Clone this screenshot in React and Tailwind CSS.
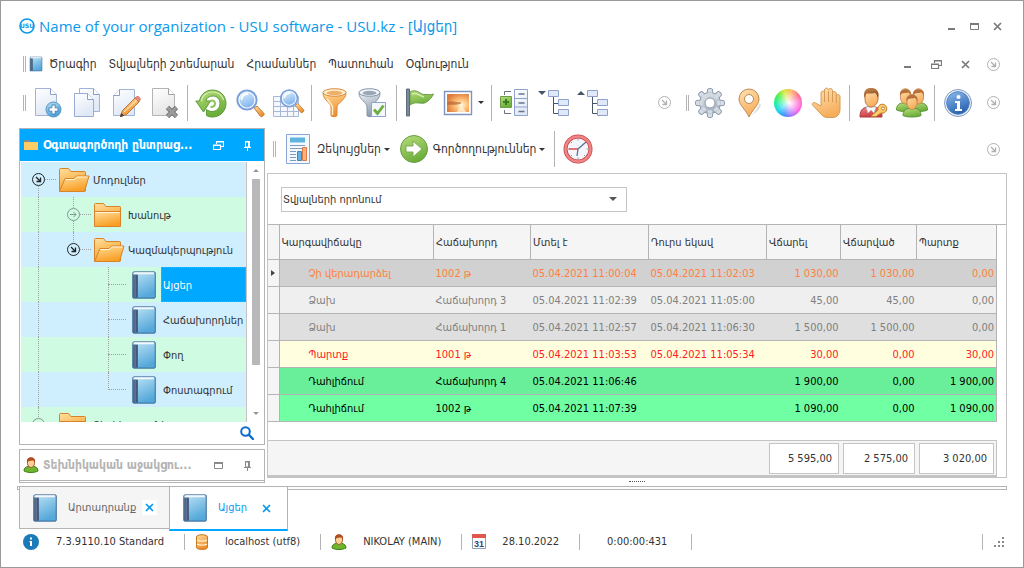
import { useState } from 'react';

const visitas = [
  { estado: 'Չի վերադարձել', cliente: '1002 թ', entrada: '05.04.2021 11:00:04', salida: '05.04.2021 11:02:03', pagar: '1 030,00', pagado: '1 030,00', deuda: '0,00', color: 'bg-[#d1d1d1] text-[#ff8040]' },
  { estado: 'Ձախ', cliente: 'Հաճախորդ 3', entrada: '05.04.2021 11:02:39', salida: '05.04.2021 11:05:00', pagar: '45,00', pagado: '45,00', deuda: '0,00', color: 'bg-[#efefef] text-[#808080]' },
  { estado: 'Ձախ', cliente: 'Հաճախորդ 1', entrada: '05.04.2021 11:02:57', salida: '05.04.2021 11:06:30', pagar: '1 500,00', pagado: '1 500,00', deuda: '0,00', color: 'bg-[#dfdfdf] text-[#808080]' },
  { estado: 'Պարտք', cliente: '1001 թ', entrada: '05.04.2021 11:03:53', salida: '05.04.2021 11:05:34', pagar: '30,00', pagado: '0,00', deuda: '30,00', color: 'bg-[#ffffe0] text-[#ff2020]' },
  { estado: 'Դահլիճում', cliente: 'Հաճախորդ 4', entrada: '05.04.2021 11:06:46', salida: '', pagar: '1 900,00', pagado: '0,00', deuda: '1 900,00', color: 'bg-[#69ef99] text-black' },
  { estado: 'Դահլիճում', cliente: '1002 թ', entrada: '05.04.2021 11:07:39', salida: '', pagar: '1 090,00', pagado: '0,00', deuda: '1 090,00', color: 'bg-[#70ffa3] text-black' },
];

const columnas = ['Կարգավիճակը', 'Հաճախորդ', 'Մտել է', 'Դուրս եկավ', 'Վճարել', 'Վճարված', 'Պարտք'];

/* Degradados compartidos por los iconos */
function Gradients() {
  const list = [
    ['gPage', '#ffffff', '#dfe8f6'],
    ['gGray', '#ffffff', '#e6e6e6'],
    ['gBlue', '#b5e2f7', '#4ba3d8'],
    ['gInfo', '#8dbdf0', '#2c64b0'],
    ['gLens', '#e9f8ff', '#7fb2ee'],
    ['gGreen', '#b9dd7c', '#6cae3a'],
    ['gOrange', '#ffdf9e', '#f08c2c'],
    ['gFolder', '#ffe0a0', '#f99f25'],
    ['gSkin', '#ffe3b5', '#f7ae5c'],
    ['gSteel', '#eef2f6', '#8c9db0'],
    ['gGear', '#e4e9ef', '#a4afbd'],
    ['gBook', '#bfe4f6', '#55a8da'],
    ['gRed', '#f08a8a', '#cc3a42'],
    ['gHair', '#c98a50', '#8a4d22'],
  ];
  return (
    <svg width="0" height="0" className="absolute" aria-hidden="true">
      <defs>
        {list.map(([id, a, b]) => (
          <linearGradient key={id} id={id} x1="0" y1="0" x2="0.4" y2="1">
            <stop offset="0" stopColor={a} />
            <stop offset="1" stopColor={b} />
          </linearGradient>
        ))}
        <radialGradient id="gSun" cx="0.65" cy="0.6" r="0.7">
          <stop offset="0" stopColor="#fffbe0" />
          <stop offset="0.4" stopColor="#ffc27a" />
          <stop offset="1" stopColor="#dd7a3c" />
        </radialGradient>
      </defs>
    </svg>
  );
}

function Icon({ size = 'size-8', children }) {
  return (
    <svg viewBox="0 0 32 32" className={`${size} shrink-0`} fill="none" aria-hidden="true">
      {children}
    </svg>
  );
}

const NewDoc = () => (
  <Icon>
    <path d="M3.500 1.500h15l6 6v21h-21z" fill="url(#gPage)" stroke="#a3b3d6" />
    <path d="M18.500 1.500v6h6" fill="#fff" stroke="#8c9fc9" />
    <circle cx="21.500" cy="22.500" r="7.500" fill="url(#gBlue)" stroke="#5794c4" />
    <path d="M21.500 17.500v10M16.500 22.500h10" stroke="#4d83b5" strokeWidth="4" />
    <path d="M21.500 18.500v8M17.500 22.500h8" stroke="#fff" strokeWidth="2.400" />
  </Icon>
);

const CopyDoc = () => (
  <Icon>
    <path d="M8.500 1.500h14l6 6v17h-20z" fill="url(#gPage)" stroke="#a3b3d6" />
    <path d="M22.500 1.500v6h6" fill="#fff" stroke="#8c9fc9" />
    <path d="M3.500 6.500h13l6 6v17h-19z" fill="url(#gPage)" stroke="#9aacd3" />
    <path d="M16.500 6.500v6h6" fill="#fff" stroke="#8c9fc9" />
  </Icon>
);

const EditDoc = () => (
  <Icon>
    <path d="M9.500 2.500h15v26h-21v-20z" fill="url(#gPage)" stroke="#a3b3d6" />
    <path d="M9.500 2.500v6h-6" fill="#fff" stroke="#8c9fc9" />
    <path d="M10.500 29.500l2-6L25 11l4 4-12.500 12.500z" fill="url(#gOrange)" stroke="#b87834" />
    <path d="M14 25L27 13" stroke="#fff0c8" />
    <path d="M25 11l2-1.500c1-.8 4 2 3.200 3.200L29 15z" fill="#f08a7a" stroke="#c96a5c" strokeWidth=".8" />
    <path d="M10.500 29.500l1-3 2 2z" fill="#444" stroke="#444" />
  </Icon>
);

const DeleteDoc = () => (
  <Icon>
    <path d="M3.500 1.500h16l6 6v21h-22z" fill="url(#gGray)" stroke="#b4b4b4" />
    <path d="M19.500 1.500v6h6" fill="#fff" stroke="#a0a0a0" />
    <path d="M18.500 20.500l9 9m0-9l-9 9" stroke="#777" strokeWidth="4.600" />
    <path d="M18.500 20.500l9 9m0-9l-9 9" stroke="#9b9b9b" strokeWidth="2.800" />
  </Icon>
);

const Refresh = () => (
  <Icon>
    <path d="M4.500 14C5.500 7.500 11 3 17.500 3 25 3 31 9 31 16.500S25 30 17.500 30c-2.500 0-4.500-.5-6-1.500v-6c1.500 1.300 3.500 2 5.500 2 4.500 0 8-3.500 8-8s-3-7.500-7-7.500-6.500 2-7 5h4.500L8.500 25 .8 14z" fill="url(#gGreen)" stroke="#5f9a3c" strokeLinejoin="round" />
    <path d="M6.500 14.500C7 8.500 12 5 17.500 5s10 3.500 11 8" stroke="#d5edaf" strokeWidth="1.200" />
    <path d="M15 14c3-1 5 0 5 2.500s-2 3.500-4.500 3.500" stroke="#8cc45a" strokeWidth="2" />
  </Icon>
);

const Lens = () => (
  <>
    <path d="M20 20l3-2 7 7.500c1 1.200-2.200 4-3.400 3z" fill="url(#gOrange)" stroke="#c08040" />
    <circle cx="13" cy="12" r="9.500" fill="url(#gLens)" stroke="#7c9fdc" strokeWidth="2.200" />
    <circle cx="13" cy="12" r="8" stroke="#f4fbff" strokeWidth="1.200" />
    <path d="M7.500 11c.5-3 3-5 6-5" stroke="#fff" strokeWidth="2" strokeLinecap="round" />
  </>
);

const Search = () => (
  <Icon>
    <g transform="translate(0 1)"><Lens /></g>
  </Icon>
);

const SearchTable = () => (
  <Icon>
    <path d="M.5 9.500h25v20H.5z" fill="#f4f8fd" stroke="#a9b8d6" />
    <path d="M.5 14.500h25M.5 19.500h25M.5 24.500h25M7.500 9.500v20M14.500 9.500v20M20.500 9.500v20" stroke="#a9b8d6" />
    <g transform="translate(5 1) scale(.86)"><Lens /></g>
  </Icon>
);

const Funnel = () => (
  <Icon>
    <path d="M4 6c0 7 8 10 8 14v8.500c0 1.500 6 1.500 6 0V20c0-4 9-7 9-14z" fill="url(#gOrange)" stroke="#d98a3d" />
    <ellipse cx="15.500" cy="5.500" rx="11.500" ry="3.800" fill="#fff0d0" stroke="#d98a3d" />
    <ellipse cx="15.500" cy="6" rx="8" ry="2.200" fill="#eeb069" />
    <path d="M8 12c2 3 5 5 5.500 8v8" stroke="#fff0cc" strokeWidth="1.400" />
  </Icon>
);

const FunnelCheck = () => (
  <Icon>
    <path d="M1 6c0 7 8 9 8 14v8.500c0 1.500 6 1.500 6 0V20c0-5 7-7 7-14z" fill="url(#gSteel)" stroke="#8694a6" />
    <ellipse cx="11.500" cy="5.500" rx="10.500" ry="3.800" fill="#f2f5f9" stroke="#8694a6" />
    <ellipse cx="11.500" cy="6" rx="7" ry="2.200" fill="#9aa7b7" />
    <path d="M13.500 15.500h14v14h-14z" fill="#f3f8ff" stroke="#8ea2cc" />
    <path d="M16 22.500l3.500 4 6-8" stroke="#6fae3c" strokeWidth="2.800" />
  </Icon>
);

const Flag = () => (
  <Icon>
    <path d="M6 5c7-4 10 3 15 2.500 3 0 5.500.5 8.500-.5-2 4-5 7.500-9 9-5 1-9-2-14.500 2z" fill="url(#gGreen)" stroke="#6a9d48" />
    <path d="M8 7c5-2 8 2 12 3" stroke="#d2ecad" strokeWidth="1.500" />
    <path d="M2.500 2h3v27h-3z" fill="#7b8a9a" stroke="#5d6c7c" />
  </Icon>
);

const Picture = () => (
  <Icon>
    <path d="M1.500 4.500h27v23h-27z" fill="#fff" stroke="#7d96bd" strokeWidth="1.400" />
    <path d="M4 7h22v18H4z" fill="url(#gSun)" />
    <path d="M4 15c5-2 9 1 14 0v1.500c-5 2-9 1-14 1.500z" fill="#b86236" opacity=".7" />
    <path d="M18 17l-4 8h9z" fill="#fff8df" opacity=".7" />
  </Icon>
);

const ListTree = () => (
  <Icon>
    <path d="M12 4.500H5.500V8M12 26.500H5.500V23" stroke="#6b7280" />
    <path d="M1.500 9.500h11v11h-11z" fill="url(#gGreen)" stroke="#6d9d4b" />
    <path d="M7 12v6M4 15h6" stroke="#3b7a25" strokeWidth="2" />
    <path d="M15.500 2.500h13v26h-13z" fill="url(#gPage)" stroke="#8ea2cc" />
    <path d="M15.500 11.500h13M15.500 20h13" stroke="#8ea2cc" />
    <path d="M19.500 7h6M19.500 16h6M19.500 24.500h6" stroke="#64748b" strokeWidth="1.600" />
  </Icon>
);

const Hierarchy = ({ up }) => (
  <Icon>
    <path d={up ? 'M0 8l4-4 4 4z' : 'M0 4h8L4 8z'} fill="#475569" />
    <path d="M15.500 10v16.500h5M15.500 16.500h5" stroke="#475569" />
    <path d="M10.500 3.500h10v6h-10zM20.500 12.500h10v6h-10zM20.500 22.500h10v6h-10z" fill="#dfe9f8" stroke="#8ea2cc" />
  </Icon>
);

const Gear = () => (
  <Icon>
    {[0, 45, 90, 135, 180, 225, 270, 315].map((a) => (
      <path key={a} d="M13 7l.7-5c.2-.8 4.400-.8 4.600 0l.7 5z" fill="#d7dde5" stroke="#8d9bad" transform={`rotate(${a} 16 16)`} />
    ))}
    <circle cx="16" cy="16" r="10.500" fill="url(#gGear)" stroke="#8d9bad" />
    {[0, 45, 90, 135, 180, 225, 270, 315].map((a) => (
      <path key={a} d="M13.700 7h4.600" stroke="#d3dae2" strokeWidth="3.500" transform={`rotate(${a} 16 16)`} />
    ))}
    <circle cx="16" cy="16" r="5" fill="#fff" stroke="#8d9bad" />
  </Icon>
);

const Pin = () => (
  <Icon>
    <path d="M17 29c5-4 8-8 9.500-13l1.500 2c-1 4-5 8-11 11z" fill="#999" opacity=".3" />
    <path d="M16 30C13 23 6 18 6 12a10 10 0 0 1 20 0c0 6-7 11-10 18z" fill="url(#gSkin)" stroke="#c08a4b" />
    <circle cx="16" cy="12" r="4.500" fill="#fff" stroke="#b98a58" />
  </Icon>
);

const ColorWheel = () => (
  <div className="relative size-7 rounded-full bg-[conic-gradient(from_90deg,#ff5bd0,#ff4fe0,#a86bff,#3f8cff,#20d8f0,#20f0a0,#50f050,#d8e83c,#ffb05c,#ff5b7c,#ff5bd0)]">
    <div className="absolute inset-0 rounded-full bg-[radial-gradient(circle_at_55%_50%,white,transparent_65%)]" />
  </div>
);

const Hand = () => (
  <Icon>
    <path d="M10 19V6c0-2.500 3.500-2.500 3.500 0V3c0-2.500 4-2.500 4 0v0c0-2 4-2 4 .5V6c0-2 3.800-2 3.800.5V9c.2-2 3.700-2 3.700.5V22c0 5-3 8.500-7 8.500h-6c-3 0-5-2-7-4.500L1.500 18c-1-2 1.500-3 3-2z" fill="url(#gSkin)" stroke="#d59a55" />
    <path d="M13.500 6v9M17.500 4v11M21.500 5v10M25.300 8v8" stroke="#d59a55" />
  </Icon>
);

const UserKey = () => (
  <Icon>
    <path d="M3 30c0-6 2-9 7-10h8c5 1 7 4 7 10z" fill="url(#gRed)" stroke="#a83c40" />
    <path d="M9 20l2 6 3-3 3 3 2-6z" fill="#fff" stroke="#b8c4d4" strokeWidth=".8" />
    <path d="M8 8c0-4 3-6.500 6-6.500S21 4 21 8v4c0 4-3.500 8-7 8s-6-4-6-8z" fill="url(#gSkin)" stroke="#b57a42" />
    <path d="M7.500 11C6 4 9 1 14 1s9 3 7 10c-1-2-1-4-3-5-4 1-8 0-9 1z" fill="url(#gHair)" />
    <path d="M14 29l7-6a4.500 4.500 0 1 1 3 3l-5 3.500h-3z" fill="#ffcb6b" stroke="#ba7f2b" />
    <circle cx="26" cy="21.500" r="1.500" fill="#fff" stroke="#ba7f2b" />
  </Icon>
);

const Head = ({ x, y }) => (
  <g transform={`translate(${x} ${y})`}>
    <path d="M-9 20c0-5 3-7 6-7h6c3 0 6 2 6 7-4 2-14 2-18 0z" fill="url(#gGreen)" stroke="#5d9639" />
    <path d="M-5 4c0-7 10-7 10 0v4c0 3-2.500 6-5 6s-5-3-5-6z" fill="url(#gSkin)" stroke="#b9804c" strokeWidth=".8" />
    <path d="M-5.500 6C-7-3 7-3 5.500 6 4.500 4.500 4 3 3 2.500-1 3.500-4 2-5.500 6z" fill="#b8703a" />
  </g>
);

const Users = () => (
  <Icon>
    <Head x={9.500} y={3} />
    <Head x={22.500} y={3} />
    <Head x={16} y={8.500} />
  </Icon>
);

const Info = () => (
  <Icon>
    <circle cx="16" cy="16" r="13.500" fill="#e8f0fa" stroke="#8599bd" />
    <circle cx="16" cy="16" r="11.300" fill="url(#gInfo)" stroke="#4f7fc0" />
    <circle cx="16.500" cy="10" r="2" fill="#fff" />
    <path d="M13 14h5v8h2v2h-7v-2h2v-6h-2z" fill="#fff" />
  </Icon>
);

const Report = () => (
  <Icon>
    <path d="M4.500 1.500h23v29h-23z" fill="#f4f9ff" stroke="#8ba6d3" />
    <path d="M8 4.500h15v5H8z" fill="#5fb4dd" />
    <path d="M8 12.500h15M8 15.500h15M8 18.500h6M8 21.500h6M8 24.500h6M8 27.500h6" stroke="#7d9cc0" />
    <path d="M15.500 18.500h4v9h-4z" fill="#5fb4e4" stroke="#3d86b8" />
    <path d="M20.500 14.500h4v13h-4z" fill="#ffb079" stroke="#dd7a48" />
  </Icon>
);

const GoArrow = () => (
  <Icon>
    <circle cx="16" cy="16" r="13.500" fill="url(#gGreen)" stroke="#6a9f43" />
    <path d="M8 13h7V8l9 8-9 8v-5H8z" fill="#fff" stroke="#7cab55" strokeLinejoin="round" />
  </Icon>
);

const Clock = () => (
  <Icon>
    <circle cx="16" cy="16" r="12.500" fill="#f3f6fa" stroke="#c9484c" strokeWidth="4" />
    <circle cx="16" cy="16" r="12.500" stroke="#f08585" strokeWidth="2.400" />
    <path d="M16 5.500v2M16 24.500v2M5.500 16h2M24.500 16h2M9 9l1 1M23 23l-1-1M9 23l1-1" stroke="#8a9ab5" />
    <path d="M16 16H7" stroke="#e03c3c" strokeWidth="1.400" />
    <path d="M16 16l8-7M16 16l-1 7" stroke="#5c7396" strokeWidth="1.300" />
  </Icon>
);

const Book = ({ size }) => (
  <Icon size={size}>
    <path d="M5 2h22a1 1 0 0 1 1 1v26a1 1 0 0 1-1 1H5a1 1 0 0 1-1-1V4c0-1 .5-2 1-2z" fill="url(#gBook)" stroke="#34618f" />
    <path d="M5 4c0-1 1-1.500 2-1.500h19.500v2H6z" fill="#f2f7fb" />
    <path d="M4.500 5h5v24.500h-5z" fill="#44587a" />
    <path d="M6.500 5v24" stroke="#7186a6" />
  </Icon>
);

const Folder = ({ open }) => (
  <Icon>
    <path d="M1.500 27V5.500c0-.8.5-1 1-1h8l2.500 3h13.500c.8 0 1 .4 1 1V27z" fill="url(#gFolder)" stroke="#d6832a" />
    {open
      ? <path d="M1.500 27.500l5.500-13h9l2.500-2.500H31L26.500 27.500z" fill="url(#gFolder)" stroke="#d6832a" />
      : <path d="M1.500 12.500h26v15h-26z" fill="url(#gFolder)" stroke="#d6832a" />}
    <path d={open ? 'M7.500 15.500h9l2.500-2.500h10.500' : 'M2.500 13.500h24'} stroke="#fff3d6" />
  </Icon>
);

const Person = () => (
  <Icon size="size-4">
    <path d="M2 28c0-6 4-9 9-9h10c5 0 9 3 9 9-8 4-20 4-28 0z" fill="#6fb52e" stroke="#3e7d16" strokeWidth="2" />
    <path d="M9 8c0-8 14-8 14 0v5c0 4-4 8-7 8s-7-4-7-8z" fill="#ffcf96" stroke="#a85a2a" strokeWidth="2" />
    <path d="M8 11C5-3 27-3 24 11c-2-3-3-4-5-4-5 1-8 0-11 4z" fill="#b04e22" />
  </Icon>
);

const CircleArrow = ({ dir = 'down', color = 'text-[#b0b0b0]' }) => (
  <svg viewBox="0 0 13 13" className={`size-[13px] shrink-0 ${color}`} fill="none" stroke="currentColor" aria-hidden="true">
    <circle cx="6.500" cy="6.500" r="6" />
    {dir === 'down' ? <path d="M4 4l4.500 4.500M8.500 4.500v4h-4" strokeWidth="1.300" /> : <path d="M3 6.500h6M6.500 4L9 6.500 6.500 9" />}
  </svg>
);

const WinIcon = ({ type }) => (
  <svg viewBox="0 0 11 11" className="size-[11px]" fill="none" stroke="currentColor" aria-hidden="true">
    {type === 'min' && <path d="M2 8h7" strokeWidth="2" />}
    {type === 'max' && <><path d="M1.500 2.500h8v6h-8z" /><path d="M1 3h9" strokeWidth="2" /></>}
    {type === 'close' && <path d="M2 2l7 7M9 2L2 9" strokeWidth="1.700" />}
    {type === 'restore' && <path d="M3.500 4V1.500h7v5H8M3 2h8M.5 5.500h7v4h-7zM0 5h8" strokeWidth="1.200" />}
    {type === 'pin' && <><path d="M3.500 2v5h4V2zM2 7.500h7M5.500 8v3M3 1.500h5" /><path d="M7 2v5" strokeWidth="2" /></>}
  </svg>
);

const Caret = () => <span className="border-x-[3px] border-t-[3px] border-x-transparent border-t-[#333]" />;

const Grip = () => <div className="h-4 w-[3px] shrink-0 border-x border-[#b4b4b4]" />;

const Sep = () => <div className="mx-[3px] h-9 w-px shrink-0 bg-[#b4b4b4]" />;

function Tool({ label, children }) {
  return (
    <button type="button" aria-label={label} className="flex w-[39px] shrink-0 items-center justify-center">
      {children}
    </button>
  );
}

function WinButton({ type, label }) {
  return (
    <button type="button" aria-label={label} className="flex size-[15px] items-center justify-center">
      <WinIcon type={type} />
    </button>
  );
}

function TitleBar() {
  return (
    <header className="flex h-[50px] items-center pr-[18px] pl-[18px]">
      <svg viewBox="0 0 16 16" className="size-4" aria-hidden="true">
        <circle cx="8" cy="8" r="7" fill="#fff" stroke="#0a9aec" strokeWidth="1.600" />
        <text x="8" y="10.300" textAnchor="middle" fontSize="6" fontWeight="bold" fontFamily="DejaVu Sans" fill="#0a9aec">USU</text>
      </svg>
      <h1 className="ml-1 font-['Open_Sans','DejaVu_Sans_Condensed',sans-serif] text-[15px] leading-6 whitespace-nowrap text-[#0a9aec]">
        Name of your organization - USU software - USU.kz - [Այցեր]
      </h1>
      <div className="ml-auto flex gap-2 text-[#7a7a7a]">
        <WinButton type="min" label="Minimize" />
        <WinButton type="max" label="Maximize" />
        <WinButton type="close" label="Close" />
      </div>
    </header>
  );
}

function MenuBar() {
  const menu = ['Ծրագիր', 'Տվյալների շտեմարան', 'Հրամաններ', 'Պատուհան', 'Օգնություն'];
  return (
    <nav className="flex h-[26px] items-center pr-[23px] pl-[22px]">
      <Grip />
      <div className="ml-[2px] mr-[5px]"><Book size="size-4" /></div>
      <div className="flex gap-3 text-xs">
        {menu.map((m) => <a key={m} href="#" className="whitespace-nowrap">{m}</a>)}
      </div>
      <div className="ml-auto flex items-center gap-[14px] text-[#7a7a7a]">
        <WinButton type="min" label="Minimize document" />
        <WinButton type="restore" label="Restore document" />
        <WinButton type="close" label="Close document" />
        <CircleArrow />
      </div>
    </nav>
  );
}

function ToolBar() {
  return (
    <div className="flex h-[51px] items-center pr-[23px] pl-[22px]">
      <Grip />
      <div className="ml-[2px] flex items-center">
        <Tool label="New"><NewDoc /></Tool>
        <Tool label="Copy"><CopyDoc /></Tool>
        <Tool label="Edit"><EditDoc /></Tool>
        <Tool label="Delete"><DeleteDoc /></Tool>
        <Sep />
        <Tool label="Refresh"><Refresh /></Tool>
        <Tool label="Search"><Search /></Tool>
        <Tool label="Search table"><SearchTable /></Tool>
        <Sep />
        <Tool label="Filter"><Funnel /></Tool>
        <Tool label="Apply filter"><FunnelCheck /></Tool>
        <Sep />
        <Tool label="Flag"><Flag /></Tool>
        <Tool label="Picture"><Picture /></Tool>
        <button type="button" aria-label="Picture options" className="flex w-[10px] justify-start"><Caret /></button>
        <Sep />
        <Tool label="Columns"><ListTree /></Tool>
        <Tool label="Expand"><Hierarchy /></Tool>
        <Tool label="Collapse"><Hierarchy up /></Tool>
      </div>
      <div className="ml-auto flex items-center">
        <CircleArrow />
        <div className="mr-px ml-[15px]"><Grip /></div>
        <Tool label="Settings"><Gear /></Tool>
        <Tool label="Map"><Pin /></Tool>
        <Tool label="Colors"><ColorWheel /></Tool>
        <Tool label="Stop"><Hand /></Tool>
        <Sep />
        <Tool label="Access"><UserKey /></Tool>
        <Tool label="Users"><Users /></Tool>
        <Sep />
        <Tool label="About"><Info /></Tool>
        <div className="ml-[10px]"><CircleArrow /></div>
      </div>
    </div>
  );
}

const arbol = [
  { nombre: 'Մոդուլներ', nivel: 0, flecha: 'down', oscuro: true, icono: 'abierta', lineas: ['ini'] },
  { nombre: 'Խանութ', nivel: 1, flecha: 'right', icono: 'cerrada', lineas: ['full', 'full'] },
  { nombre: 'Կազմակերպություն', nivel: 1, flecha: 'down', oscuro: true, icono: 'abierta', lineas: ['full', 'fin'] },
  { nombre: 'Այցեր', nivel: 2, icono: 'libro', lineas: ['full', '', 'full'] },
  { nombre: 'Հաճախորդներ', nivel: 2, icono: 'libro', lineas: ['full', '', 'full'] },
  { nombre: 'Փող', nivel: 2, icono: 'libro', lineas: ['full', '', 'full'] },
  { nombre: 'Փոստագրում', nivel: 2, icono: 'libro', lineas: ['full', '', 'fin'] },
  { nombre: 'Տեղեկատուներ', nivel: 0, flecha: 'right', icono: 'cerrada', lineas: ['fin'] },
];

const tramo = {
  full: 'top-0 bottom-0',
  ini: 'top-1/2 bottom-0',
  fin: 'top-0 bottom-1/2',
};

function TreeRow({ item, index, activo, onSelect }) {
  return (
    <li className={`flex h-[35px] ${index % 2 ? 'bg-[#cffbe3]' : 'bg-[#cfefff]'}`}>
      {item.lineas.map((linea, i) => {
        const ultimo = i === item.lineas.length - 1;
        return (
          <div key={i} className="relative flex w-[35px] shrink-0 items-center justify-center">
            {linea && <div className={`absolute left-[17px] border-l border-dotted border-[#a0a0a0] ${tramo[linea]}`} />}
            {ultimo && <div className="absolute top-[17px] right-0 left-[17px] border-t border-dotted border-[#a0a0a0]" />}
            {ultimo && item.flecha && (
              <span className={`relative rounded-full ${index % 2 ? 'bg-[#cffbe3]' : 'bg-[#cfefff]'}`}>
                <CircleArrow dir={item.flecha} color={item.oscuro ? 'text-[#222]' : 'text-[#7d9a8a]'} />
              </span>
            )}
          </div>
        );
      })}
      <div className="flex w-[35px] shrink-0 items-center justify-center">
        {item.icono === 'libro' ? <Book size="size-[30px]" /> : <Folder open={item.icono === 'abierta'} />}
      </div>
      <button
        type="button"
        onClick={() => onSelect(item.nombre)}
        className={`flex grow items-center border border-dotted px-px pt-[2px] text-left whitespace-nowrap ${activo ? 'border-[#e08060] bg-[#00a8ff] text-white' : 'border-transparent'}`}
      >
        {item.nombre}
      </button>
    </li>
  );
}

function Sidebar() {
  const [seleccion, setSeleccion] = useState('Այցեր');

  return (
    <aside className="mb-[3px] flex w-[246px] shrink-0 flex-col">
      <section className="flex grow flex-col border border-[#b4b4b4]">
        <div className="flex h-8 items-center bg-[#00a8ff] pr-[9px] pl-1 text-white">
          <svg viewBox="0 0 14 10" className="h-[10px] w-[14px]" aria-hidden="true">
            <path d="M0 0h5l1 2h8v8H0z" fill="#ffcc66" />
            <path d="M0 0h5l1 2H0z" fill="#8a8a8a" />
          </svg>
          <h2 className="ml-[5px] text-xs font-bold whitespace-nowrap">Օգտագործողի ընտրաց...</h2>
          <div className="ml-auto flex gap-[14px]">
            <WinButton type="restore" label="Float panel" />
            <WinButton type="pin" label="Pin panel" />
          </div>
        </div>
        <div className="mt-px flex h-[260px] overflow-hidden pl-px">
          <ul className="min-w-0 grow border-r border-[#c4c4c4]">
            {arbol.map((item, i) => (
              <TreeRow key={item.nombre} item={item} index={i} activo={seleccion === item.nombre} onSelect={setSeleccion} />
            ))}
          </ul>
          <div className="flex w-[17px] shrink-0 flex-col items-center py-[7px]">
            <span className="border-x-[3px] border-b-[3px] border-x-transparent border-b-[#999]" />
            <div className="mt-[7px] h-[186px] w-2 bg-[#b8b8b8]" />
            <span className="mt-auto border-x-[3px] border-t-[3px] border-x-transparent border-t-[#999]" />
          </div>
        </div>
        <div className="flex grow items-center justify-end pr-[10px]">
          <button type="button" aria-label="Find in tree">
            <svg viewBox="0 0 14 14" className="size-[14px]" fill="none" stroke="#0a6bd0" strokeLinecap="round" aria-hidden="true">
              <circle cx="5.500" cy="5.500" r="4.300" strokeWidth="2" />
              <path d="M9 9l4 4" strokeWidth="2.400" />
            </svg>
          </button>
        </div>
      </section>
      <section className="mt-1 border border-[#b4b4b4]">
        <div className="flex h-[31px] items-center border-b border-[#b4b4b4] pr-[9px] pl-[3px] text-[#8a8a8a]">
          <Person />
          <h2 className="ml-1 text-xs font-bold whitespace-nowrap text-[#b4b4b4]">Տեխնիկական աջակցու...</h2>
          <div className="ml-auto flex gap-[14px]">
            <WinButton type="max" label="Maximize panel" />
            <WinButton type="pin" label="Pin support panel" />
          </div>
        </div>
        <div className="h-px" />
      </section>
    </aside>
  );
}

function VisitsTable() {
  return (
    <div className="pr-[9px]">
      <table className="w-full table-fixed border-collapse">
        <colgroup>
          <col className="w-[11px]" />
          <col />
          <col className="w-[97px]" />
          <col className="w-[118px]" />
          <col className="w-[118px]" />
          <col className="w-[74px]" />
          <col className="w-[76px]" />
          <col className="w-[80px]" />
        </colgroup>
        <thead>
          <tr className="h-[34px] bg-[#f5f5f5]">
            <th className="border-r border-b border-[#b4b4b4]" aria-label="Current row" />
            {columnas.map((c) => (
              <th key={c} className="border-r border-b border-[#b4b4b4] px-[2px] pt-[3px] text-left font-normal whitespace-nowrap">{c}</th>
            ))}
          </tr>
        </thead>
        <tbody>
          {visitas.map((v, i) => (
            <tr key={i} className={`h-[27px] border-b border-[#b4b4b4] ${v.color}`}>
              <td className="border-r border-[#b4b4b4] bg-[#f5f5f5]">
                {i === 0 && <div className="mx-auto w-0 border-y-[3px] border-l-[4px] border-y-transparent border-l-[#444]" />}
              </td>
              <td className="pt-[2px] pl-[29px]">{v.estado}</td>
              <td className="px-[2px] pt-[2px]">{v.cliente}</td>
              <td className="px-[2px] pt-[2px] whitespace-nowrap">{v.entrada}</td>
              <td className="px-[2px] pt-[2px] whitespace-nowrap">{v.salida}</td>
              <td className="px-[2px] pt-[2px] text-right">{v.pagar}</td>
              <td className="px-[2px] pt-[2px] text-right">{v.pagado}</td>
              <td className="border-r border-[#b4b4b4] px-[2px] pt-[2px] text-right">{v.deuda}</td>
            </tr>
          ))}
        </tbody>
      </table>
    </div>
  );
}

function MainPanel() {
  return (
    <main className="flex min-w-0 grow flex-col">
      <div className="mb-[3px] flex h-[42px] items-center pr-[7px] pl-[6px] text-xs">
        <Grip />
        <button type="button" className="ml-[6px] flex items-center gap-[3px] whitespace-nowrap">
          <Report />Զեկույցներ<Caret />
        </button>
        <button type="button" className="ml-2 flex items-center gap-[3px] whitespace-nowrap">
          <GoArrow />Գործողություններ<Caret />
        </button>
        <div className="ml-[6px]"><Sep /></div>
        <Tool label="Schedule"><Clock /></Tool>
        <div className="ml-auto"><CircleArrow /></div>
      </div>

      <div className="flex grow flex-col border border-[#c4c4c4]">
        <div className="border-b border-[#b4b4b4] pt-[13px] pb-3 pl-[13px]">
          <div className="relative h-[25px] w-[346px]">
            <select aria-label="Տվյալների որոնում" className="size-full appearance-none border border-[#c4c4c4] bg-white px-px">
              <option>Տվյալների որոնում</option>
            </select>
            <span className="pointer-events-none absolute top-[10px] right-[10px] border-x-4 border-t-4 border-x-transparent border-t-[#555]" />
          </div>
        </div>

        <VisitsTable />

        {/* Totales */}
        <div className="mt-auto mr-[9px] flex h-[37px] items-center justify-end gap-1 border-t border-r border-b-2 border-[#c4c4c4] bg-[#f5f5f5] pr-[2px]">
          <div className="flex h-[31px] w-[70px] items-center justify-end border border-[#c4c4c4] bg-white pt-[2px] pr-[6px]">5 595,00</div>
          <div className="flex h-[31px] w-[72px] items-center justify-end border border-[#c4c4c4] bg-white pt-[2px] pr-[6px]">2 575,00</div>
          <div className="flex h-[31px] w-[75px] items-center justify-end border border-[#c4c4c4] bg-white pt-[2px] pr-[6px]">3 020,00</div>
        </div>
      </div>

      <div className="mt-[3px] mb-1 w-4 self-center border-t border-dotted border-[#555]" />
    </main>
  );
}

function Tabs() {
  const [tab, setTab] = useState('visitas');
  const tabs = [
    { id: 'ventas', nombre: 'Արտադրանք', w: 'w-[151px]' },
    { id: 'visitas', nombre: 'Այցեր', w: 'w-[119px]' },
  ];
  return (
    <div className="mr-4 ml-4">
      <div className="h-1 border border-[#b4b4b4]" />
      <div className="relative -mt-[3px] ml-[2px] flex h-11 items-start">
        {tabs.map((t) => (
          <div
            key={t.id}
            className={`flex items-center border-[#b4b4b4] pr-[13px] pl-[10px] ${t.w} ${tab === t.id ? '-ml-px h-11 border-x border-b-2 border-b-[#00a8ff] bg-white text-[#0a9aec]' : 'h-[42px] border-b border-l bg-[#f5f5f5] text-[#666]'}`}
          >
            <button type="button" onClick={() => setTab(t.id)} className="flex items-center gap-2">
              <Book size="size-[30px]" />{t.nombre}
            </button>
            <button type="button" aria-label={`Close ${t.nombre}`} className="ml-auto flex size-[15px] items-center justify-center bg-white text-[#0a9aec]">
              <WinIcon type="close" />
            </button>
          </div>
        ))}
      </div>
    </div>
  );
}

const StatusSep = () => <div className="mr-[10px] ml-5 h-4 w-px bg-[#b4b4b4]" />;

function StatusBar() {
  return (
    <footer className="mb-[15px] flex h-[21px] items-center pr-[18px] pl-[22px] whitespace-nowrap">
      <svg viewBox="0 0 16 16" className="size-4" aria-hidden="true">
        <circle cx="8" cy="8" r="8" fill="#1a7bb8" />
        <path d="M7 3.500h2v2H7zM6.500 7H9v5H7V8h-.5z" fill="#fff" />
      </svg>
      <span className="ml-[17px]">7.3.9110.10 Standard</span>
      <StatusSep />
      <svg viewBox="0 0 14 16" className="h-4 w-[14px]" aria-hidden="true">
        <path d="M1.500 3c0-3 11-3 11 0v10.500c0 2.500-11 2.500-11 0z" fill="url(#gOrange)" stroke="#c4761c" />
        <path d="M2 6c2 1.500 8 1.500 10 0M2 10c2 1.500 8 1.500 10 0" fill="none" stroke="#fff1d0" strokeWidth="1.300" />
      </svg>
      <span className="ml-4">localhost (utf8)</span>
      <StatusSep />
      <Person />
      <span className="ml-4">NIKOLAY (MAIN)</span>
      <StatusSep />
      <svg viewBox="0 0 14 15" className="h-[15px] w-[14px]" aria-hidden="true">
        <path d="M.5.500h13v14H.5z" fill="#fff" stroke="#8ea0b8" />
        <path d="M0 0h14v4H0z" fill="#e2574c" />
        <text x="7" y="12.500" textAnchor="middle" fontSize="9" fontWeight="bold" fontFamily="Liberation Sans" fill="#34496b">31</text>
      </svg>
      <span className="ml-4">28.10.2022</span>
      <StatusSep />
      <span className="ml-[17px]">0:00:00:431</span>
      <div className="ml-6 h-4 w-px bg-[#b4b4b4]" />
      <div className="ml-auto h-4 w-px bg-[#b4b4b4]" />
      <svg viewBox="0 0 12 12" className="ml-[10px] size-3" fill="#888" aria-hidden="true">
        {[[9, 1], [5, 5], [9, 5], [1, 9], [5, 9], [9, 9]].map(([x, y]) => <rect key={`${x}-${y}`} x={x} y={y} width="2" height="2" />)}
      </svg>
    </footer>
  );
}

export default function App() {
  return (
    <div className="flex min-h-screen w-full flex-col border border-[#999] bg-white font-['DejaVu_Sans_Condensed','DejaVu_Sans',sans-serif] text-[11px] leading-4 text-[#333]">
      <Gradients />
      <TitleBar />
      <MenuBar />
      <ToolBar />
      <div className="flex grow pr-4 pl-[18px]">
        <Sidebar />
        <div className="w-[2px] shrink-0" />
        <MainPanel />
      </div>
      <Tabs />
      <StatusBar />
    </div>
  );
}
